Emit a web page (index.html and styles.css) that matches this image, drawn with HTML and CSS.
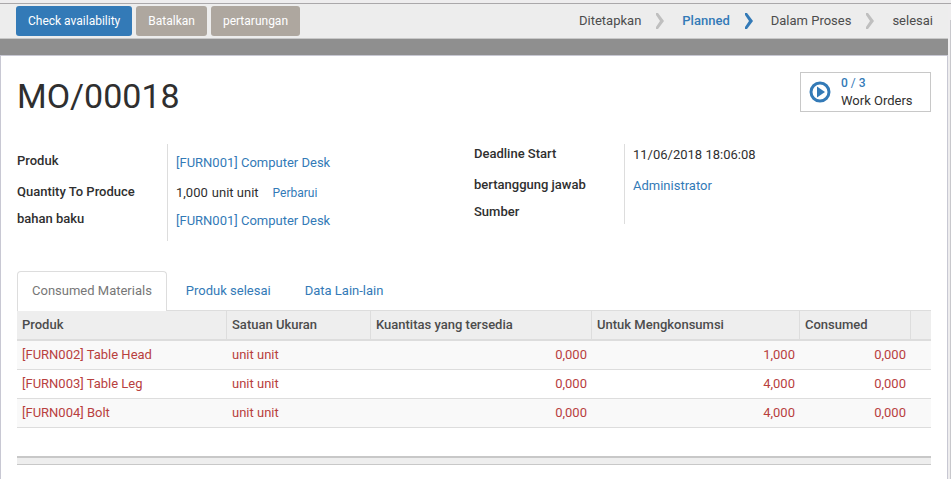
FILE: index.html
```html
<!DOCTYPE html>
<html lang="id">
<head>
<meta charset="utf-8">
<title>MO/00018</title>
<link rel="stylesheet" href="styles.css">
</head>
<body>
<div class="window">
  <div class="view">
    <header class="statusbar">
      <div class="actions">
        <button class="btn btn-primary" type="button">Check availability</button>
        <button class="btn" type="button">Batalkan</button>
        <button class="btn" type="button">pertarungan</button>
      </div>
      <ul class="stages">
        <li>Ditetapkan</li>
        <li class="chevron"><svg viewBox="0 0 8 16"><path d="M0 0h2l6 8-6 8H0V14l4-6-4-6z"/></svg></li>
        <li class="current">Planned</li>
        <li class="chevron current"><svg viewBox="0 0 8 16"><path d="M0 0h2l6 8-6 8H0V14l4-6-4-6z"/></svg></li>
        <li>Dalam Proses</li>
        <li class="chevron"><svg viewBox="0 0 8 16"><path d="M0 0h2l6 8-6 8H0V14l4-6-4-6z"/></svg></li>
        <li>selesai</li>
      </ul>
    </header>
    <main class="sheet">
      <div class="title-row">
        <h1>MO/00018</h1>
        <button class="stat" type="button">
          <svg viewBox="0 0 22 22"><circle cx="11" cy="11" r="9" fill="none" stroke="currentColor" stroke-width="3"/><path d="M8 5.5v11l8-5.5z" fill="currentColor"/></svg>
          <span class="stat-text"><span class="stat-value"><b>0</b> <span>/</span> <b>3</b></span><span>Work Orders</span></span>
        </button>
      </div>
      <div class="groups">
        <div class="group">
          <div class="labels"><span class="first">Produk</span><span>Quantity To Produce</span><span>bahan baku</span></div>
          <div class="values">
            <a href="#">[FURN001] Computer Desk</a>
            <span class="quantity"><span>1,000</span><span>unit unit</span><a class="update" href="#">Perbarui</a></span>
            <a href="#">[FURN001] Computer Desk</a>
          </div>
        </div>
        <div class="group group-dates">
          <div class="labels"><span class="first">Deadline Start</span><span>bertanggung jawab</span><span>Sumber</span></div>
          <div class="values">
            <span>11/06/2018 18:06:08</span>
            <a href="#">Administrator</a>
          </div>
        </div>
      </div>
      <nav class="tabs">
        <a class="active" href="#">Consumed Materials</a>
        <a href="#">Produk selesai</a>
        <a href="#">Data Lain-lain</a>
      </nav>
      <table>
        <colgroup><col class="c-product"><col class="c-unit"><col><col class="c-todo"><col class="c-done"><col class="c-action"></colgroup>
        <thead><tr><th>Produk</th><th>Satuan Ukuran</th><th>Kuantitas yang tersedia</th><th>Untuk Mengkonsumsi</th><th>Consumed</th><th></th></tr></thead>
        <tbody>
          <tr><td>[FURN002] Table Head</td><td>unit unit</td><td class="num">0,000</td><td class="num">1,000</td><td class="num">0,000</td><td></td></tr>
          <tr><td>[FURN003] Table Leg</td><td>unit unit</td><td class="num">0,000</td><td class="num">4,000</td><td class="num">0,000</td><td></td></tr>
          <tr><td>[FURN004] Bolt</td><td>unit unit</td><td class="num">0,000</td><td class="num">4,000</td><td class="num">0,000</td><td></td></tr>
        </tbody>
      </table>
      <div class="table-footer"></div>
    </main>
  </div>
  <div class="gutter"></div>
</div>
</body>
</html>
```
FILE: styles.css
```css
* { box-sizing: border-box; }
body {
  margin: 0;
  background: #eeedee;
  color: #2f2f2f;
  font: 13px/20px Roboto, sans-serif;
  overflow: hidden;
}
a { color: #337ab7; text-decoration: none; }
button { font: inherit; cursor: pointer; }
.window {
  display: flex;
  margin-top: 3px;
  border-top: 1px solid #aaa8aa;
  min-height: calc(100vh - 3px);
}
.view {
  flex: 1;
  display: flex;
  flex-direction: column;
  background: #8f8f8f;
}
.gutter {
  width: 3px;
  margin-top: 16px;
  border-right: 1px solid #c8c8cc;
}
.statusbar {
  display: flex;
  justify-content: space-between;
  align-items: center;
  height: 35px;
  padding: 0 15px 0 16px;
  background: #ededed;
  border-bottom: 1px solid #c8c8c8;
}
.actions { display: flex; gap: 4px; }
.btn {
  height: 30px;
  padding: 0 12px;
  border: 0;
  border-radius: 3px;
  background: #aea79f;
  color: #fff;
  font-size: 12px;
}
.btn-primary { background: #337ab7; }
.stages {
  display: flex;
  align-items: center;
  margin: 0;
  padding: 0;
  list-style: none;
  color: #4c4c4c;
}
.stages .current { color: #337ab7; font-weight: 500; }
.chevron { margin: 0 18px 0 15px; color: #bfbfbf; }
.chevron svg { display: block; width: 8px; height: 16px; fill: currentColor; }
.sheet {
  flex: 1;
  margin-top: 16px;
  padding: 16px 16px 0 16px;
  background: #fff;
  border: 1px solid #c8c8d3;
  border-bottom: 0;
}
.title-row { display: flex; justify-content: space-between; align-items: flex-start; }
h1 { margin: 0; font-size: 34px; line-height: 48px; font-weight: 400; }
.stat {
  display: flex;
  align-items: center;
  gap: 10px;
  width: 131px;
  height: 40px;
  padding: 0 8px;
  border: 1px solid #c8c8c8;
  background: #fff;
  color: #2f2f2f;
  text-align: left;
}
.stat svg { width: 22px; height: 22px; color: #337ab7; }
.stat-text { display: flex; flex-direction: column; line-height: 17px; }
.stat-value { color: #337ab7; font-size: 12px; }
.stat-value b { font-weight: 500; }
.groups {
  display: grid;
  grid-template-columns: 1fr 1fr;
  align-items: start;
  margin-top: 24px;
}
.group { display: grid; grid-template-columns: 150px 1fr; min-height: 97px; }
.group-dates { min-height: 80px; }
.labels, .values { display: flex; flex-direction: column; }
.labels { padding-top: 7px; gap: 7px; font-weight: 500; }
.labels .first { margin-bottom: 4px; }
.values { padding: 9px 0 0 8px; gap: 8px; border-left: 1px solid #ddd; align-items: flex-start; }
.group-dates .labels { padding-top: 0; }
.group-dates .values { padding-top: 1px; gap: 11px; }
.quantity { display: flex; gap: 4px; margin-top: 2px; }
.update { margin-left: 10px; font-size: 12px; }
.tabs {
  display: flex;
  gap: 4px;
  margin-top: 30px;
  border-bottom: 1px solid #ddd;
}
.tabs a {
  padding: 9px 14px 10px;
  margin-bottom: -1px;
  border: 1px solid transparent;
  border-bottom: 0;
  border-radius: 4px 4px 0 0;
}
.tabs .active { color: #777; border-color: #ddd; background: #fff; }
table {
  width: 100%;
  table-layout: fixed;
  border-collapse: separate;
  border-spacing: 0;
}
.c-product { width: 210px; }
.c-unit { width: 144px; }
.c-todo { width: 208px; }
.c-done { width: 111px; }
.c-action { width: 20px; }
th {
  height: 30px;
  padding: 0 5px;
  background: #eee;
  border-right: 1px solid #ddd;
  border-bottom: 2px solid #ddd;
  color: #4c4c4c;
  font-weight: 500;
  text-align: left;
}
th:last-child { border-right: 0; }
td { height: 29px; padding: 0 5px; border-bottom: 1px solid #ddd; color: #b8403e; }
tbody tr:nth-child(odd) { background: #f9f9f9; }
.num { text-align: right; }
.table-footer {
  height: 9px;
  margin-top: 28px;
  background: #eee;
  border-top: 2px solid #c8c8c8;
  border-bottom: 1px solid #c8c8c8;
}
```
